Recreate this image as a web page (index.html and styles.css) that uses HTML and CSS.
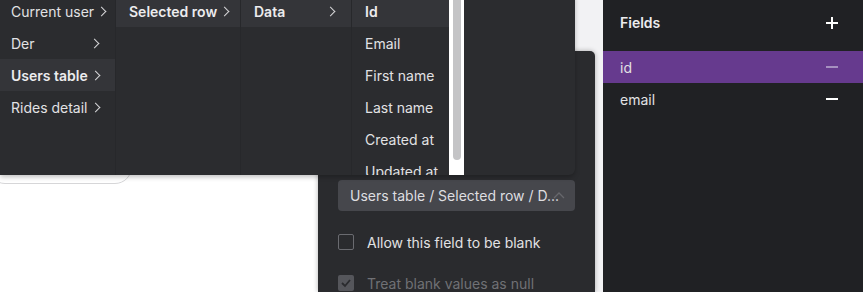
FILE: index.html
```html
<!DOCTYPE html>
<html lang="en">
  <head>
    <meta charset="UTF-8" />
    <meta name="viewport" content="width=device-width, initial-scale=1.0" />
    <title>Form fields</title>
    <link rel="stylesheet" href="styles.css">
  </head>
  <body>
    <div class="app">
      <main class="canvas">
        <div class="sheet">
          <div class="pill"></div>
        </div>

        <section class="editor">
          <div class="select">
            <span class="select-value">Users table / Selected row / D...</span>
            <svg class="select-caret" width="12" height="7" viewBox="0 0 12 7">
              <polyline points="1,6 6,1 11,6" fill="none" stroke="currentColor" stroke-width="1.3" />
            </svg>
          </div>
          <label class="check">
            <span class="box"></span>
            <span>Allow this field to be blank</span>
          </label>
          <label class="check disabled">
            <span class="box checked">
              <svg width="12" height="10" viewBox="0 0 12 10">
                <polyline points="2,5 5,8 10,2" fill="none" stroke="currentColor" stroke-width="1.8" />
              </svg>
            </span>
            <span>Treat blank values as null</span>
          </label>
        </section>

        <div class="menu">
          <ul class="menu-col col-1">
            <li class="menu-item">Current user<i class="chev"></i></li>
            <li class="menu-item">Der<i class="chev"></i></li>
            <li class="menu-item active">Users table<i class="chev"></i></li>
            <li class="menu-item">Rides detail<i class="chev"></i></li>
          </ul>
          <ul class="menu-col col-2">
            <li class="menu-item active">Selected row<i class="chev"></i></li>
          </ul>
          <ul class="menu-col col-3">
            <li class="menu-item active">Data<i class="chev"></i></li>
          </ul>
          <ul class="menu-col col-4">
            <li class="menu-item active">Id</li>
            <li class="menu-item">Email</li>
            <li class="menu-item">First name</li>
            <li class="menu-item">Last name</li>
            <li class="menu-item">Created at</li>
            <li class="menu-item">Updated at</li>
          </ul>
          <div class="scrollbar"><div class="thumb"></div></div>
        </div>
      </main>

      <aside class="fields">
        <div class="fields-head">
          <span class="fields-title">Fields</span>
          <svg width="12" height="12" viewBox="0 0 12 12">
            <path d="M6 0v12M0 6h12" stroke="currentColor" stroke-width="2" />
          </svg>
        </div>
        <div class="field-row selected">
          <span>id</span>
          <svg class="minus" width="12" height="2" viewBox="0 0 12 2">
            <path d="M0 1h12" stroke="currentColor" stroke-width="2" />
          </svg>
        </div>
        <div class="field-row">
          <span>email</span>
          <svg class="minus" width="12" height="2" viewBox="0 0 12 2">
            <path d="M0 1h12" stroke="currentColor" stroke-width="2" />
          </svg>
        </div>
      </aside>
    </div>
  </body>
</html>
```

FILE: styles.css
```css
body {
  margin: 0;
  font-family: Inter, "Noto Sans", sans-serif;
  font-size: 14px;
  color: #e2e2e4;
  overflow: hidden;
}

ul {
  margin: 0;
  padding: 0;
  list-style: none;
}

.app {
  display: flex;
  width: 863px;
  height: 292px;
}

.canvas {
  position: relative;
  width: 603px;
  background: #f2f2f4;
}

.sheet {
  width: 330px;
  height: 100%;
  background: #fff;
  overflow: hidden;
}

.pill {
  margin: 149px 0 0 -12px;
  width: 142px;
  height: 33px;
  border: 1px solid #d6d6d8;
  border-radius: 17px;
}

/* settings panel behind the dropdown */
.editor {
  position: absolute;
  left: 318px;
  top: 51px;
  bottom: 0;
  width: 277px;
  box-sizing: border-box;
  padding: 129px 20px 0;
  background: #2a2b2e;
  border-radius: 5px 5px 0 0;
  box-shadow: 0 0 5px rgba(0, 0, 0, 0.3);
}

.select {
  position: relative;
  height: 31px;
  padding: 0 12px;
  display: flex;
  align-items: center;
  background: #46474c;
  border-radius: 4px;
}

.select-value {
  color: #dedee0;
  white-space: nowrap;
}

.select-caret {
  position: absolute;
  right: 10px;
  top: 12px;
  color: #66676c;
}

.check {
  display: flex;
  align-items: center;
  gap: 13px;
  height: 16px;
  margin-top: 23px;
  color: #e2e2e4;
}

.check + .check {
  margin-top: 25px;
}

.box {
  width: 16px;
  height: 16px;
  box-sizing: border-box;
  border: 1.5px solid #6a6b70;
  border-radius: 2px;
  display: flex;
  align-items: center;
  justify-content: center;
}

.box.checked {
  border: none;
  background: #55565b;
  color: #2a2b2e;
}

.check.disabled {
  color: #707175;
}

/* variable picker dropdown */
.menu {
  position: absolute;
  left: 0;
  top: -5px;
  width: 575px;
  height: 180px;
  display: flex;
  background: #2b2c2f;
  border-radius: 0 0 6px 0;
  box-shadow: 0 2px 5px rgba(0, 0, 0, 0.25);
  overflow: hidden;
}

.menu-col {
  height: 100%;
  border-right: 1px solid #27282b;
}

.col-1 { width: 115px; }
.col-2 { width: 124px; }
.col-3 { width: 110px; }
.col-4 { width: 97px; border-right: none; }

.menu-item {
  height: 32px;
  display: flex;
  align-items: center;
  justify-content: space-between;
  padding: 0 17px 0 13px;
  white-space: nowrap;
}

.col-1 .menu-item {
  padding-left: 11px;
}

.menu-item.active {
  background: #343539;
  font-weight: 600;
  color: #ececee;
}

.chev {
  width: 6px;
  height: 6px;
  margin-left: 4px;
  border-top: 1.2px solid #d6d6d8;
  border-right: 1.2px solid #d6d6d8;
  transform: rotate(45deg);
  flex-shrink: 0;
}

.scrollbar {
  width: 15px;
  height: 100%;
  background: #fff;
  display: flex;
  justify-content: center;
}

.thumb {
  width: 8px;
  height: 165px;
  background: #c4c4c6;
  border-radius: 4px;
}

/* fields list */
.fields {
  width: 260px;
  background: #202124;
  color: #e2e2e4;
}

.fields-head {
  height: 51px;
  display: flex;
  align-items: center;
  justify-content: space-between;
  padding: 0 25px 6px 17px;
  box-sizing: border-box;
  color: #fff;
}

.fields-title {
  font-weight: 600;
  color: #ececee;
}

.field-row {
  height: 32px;
  display: flex;
  align-items: center;
  justify-content: space-between;
  padding: 0 25px 0 17px;
}

.field-row .minus {
  color: #fff;
}

.field-row.selected {
  background: #663a8e;
}

.field-row.selected .minus {
  color: #a690c0;
}
```
